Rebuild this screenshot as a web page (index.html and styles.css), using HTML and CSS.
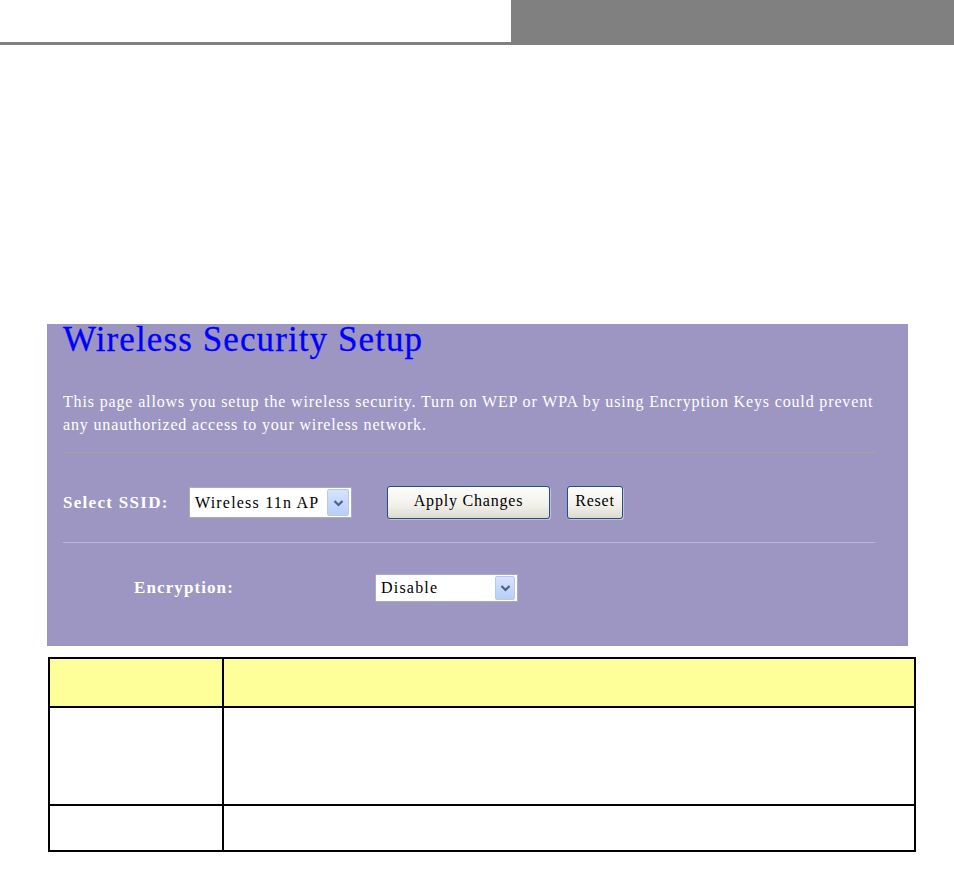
FILE: index.html
```html
<!doctype html>
<html lang="en">
  <head>
    <meta charset="UTF-8" />
    <title>Wireless Security Setup</title>
    <link rel="stylesheet" href="styles.css">
  </head>
  <body>
    <div class="page-head">
      <div class="head-left"></div>
      <div class="head-right"></div>
    </div>

    <div class="panel">
      <h1 class="title">Wireless Security Setup</h1>
      <p class="desc">
        This page allows you setup the wireless security. Turn on WEP or WPA by using Encryption Keys could prevent
        any unauthorized access to your wireless network.
      </p>
      <div class="rule rule-dark"></div>

      <div class="row row-ssid">
        <span class="label">Select SSID:</span>
        <div class="select select-ssid">
          <span class="select-text">Wireless 11n AP</span>
          <span class="select-btn">
            <svg width="11" height="8" viewBox="0 0 11 8"><path d="M1.5 2 L5.5 6 L9.5 2" fill="none" stroke="#4d6185" stroke-width="2.2"/></svg>
          </span>
        </div>
        <button class="btn btn-apply">Apply Changes</button>
        <button class="btn btn-reset">Reset</button>
      </div>

      <div class="rule rule-light"></div>

      <div class="row row-enc">
        <span class="label label-enc">Encryption:</span>
        <div class="select select-enc">
          <span class="select-text">Disable</span>
          <span class="select-btn">
            <svg width="11" height="8" viewBox="0 0 11 8"><path d="M1.5 2 L5.5 6 L9.5 2" fill="none" stroke="#4d6185" stroke-width="2.2"/></svg>
          </span>
        </div>
      </div>
    </div>

    <table class="info">
      <tr class="info-head">
        <td class="col-a"></td>
        <td></td>
      </tr>
      <tr class="info-row2">
        <td class="col-a"></td>
        <td></td>
      </tr>
      <tr class="info-row3">
        <td class="col-a"></td>
        <td></td>
      </tr>
    </table>
  </body>
</html>
```

FILE: styles.css
```css
* {
  margin: 0;
  padding: 0;
  box-sizing: border-box;
}

body {
  font-family: "Liberation Serif", "Times New Roman", serif;
  background: #fff;
  width: 954px;
}

/* top header strip */
.page-head {
  display: flex;
  height: 45px;
}

.head-left {
  width: 511px;
  border-bottom: 3px solid #808080;
}

.head-right {
  flex: 1;
  background: #808080;
}

/* purple settings panel */
.panel {
  margin: 279px 0 0 47px;
  width: 861px;
  height: 322px;
  background: #9d96c2;
  padding: 0 33px 0 16px;
  overflow: hidden;
}

.title {
  font-weight: normal;
  font-size: 35px;
  line-height: 32px;
  color: #0000ff;
  letter-spacing: 1.1px;
  -webkit-text-stroke: 0.3px #0000ff;
}

.desc {
  margin-top: 34px;
  font-size: 16px;
  line-height: 23px;
  color: #fff;
  letter-spacing: 0.85px;
}

.rule {
  height: 1px;
}

.rule-dark {
  margin-top: 16px;
  background: #a7a1a6;
}

.rule-light {
  margin-top: 23px;
  background: #b7b4e0;
}

.row {
  display: flex;
  align-items: center;
}

.row-ssid {
  margin-top: 33px;
  height: 33px;
}

.row-enc {
  margin-top: 31px;
  height: 28px;
}

.label {
  color: #fff;
  font-weight: bold;
  font-size: 17px;
  letter-spacing: 1.3px;
  width: 126px;
}

.label-enc {
  margin-left: 71px;
  width: 241px;
  letter-spacing: 1.1px;
}

.select {
  display: flex;
  align-items: center;
  background: #fff;
  border: 1px solid #a5acc6;
  padding: 1px 2px 1px 5px;
  color: #000;
  font-size: 16px;
  letter-spacing: 1.2px;
}

.select-text {
  flex: 1;
}

.select-btn {
  width: 22px;
  display: flex;
  align-items: center;
  justify-content: center;
  background: linear-gradient(#d6e3fe, #b8cdf9);
  border: 1px solid #b9c9ec;
  border-radius: 2px;
}

.select-ssid {
  width: 163px;
  height: 31px;
}

.select-ssid .select-btn {
  height: 27px;
}

.select-enc {
  width: 143px;
  height: 28px;
}

.select-enc .select-btn {
  height: 24px;
  width: 20px;
}

.btn {
  font-family: "Liberation Serif", "Times New Roman", serif;
  font-size: 16px;
  letter-spacing: 0.8px;
  color: #000;
  height: 33px;
  border: 1px solid #24507d;
  border-radius: 3px;
  background: linear-gradient(#fdfdfc, #f1f0ea 60%, #dcdad0);
  box-shadow: 1px 1px 0 #c3c0d8;
  padding-bottom: 4px;
}

.btn-apply {
  width: 163px;
  margin-left: 35px;
}

.btn-reset {
  width: 56px;
  margin-left: 17px;
}

/* parameter table below */
.info {
  margin: 11px 0 0 48px;
  width: 868px;
  border-collapse: collapse;
}

.info td {
  border: 2px solid #000;
}

.info .col-a {
  width: 174px;
}

.info-head td {
  background: #ffff99;
  height: 49px;
}

.info-row2 td {
  height: 98px;
}

.info-row3 td {
  height: 46px;
}
```
